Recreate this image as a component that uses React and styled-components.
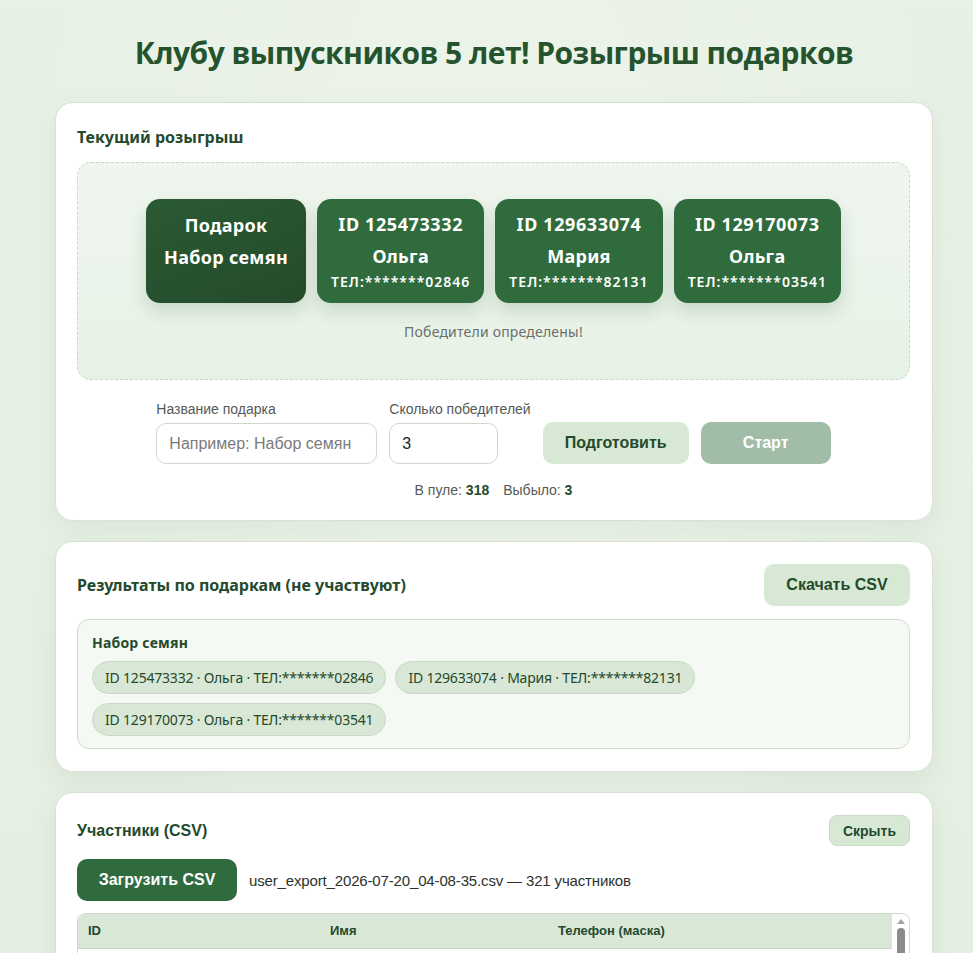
import React from 'react'
import styled, { createGlobalStyle } from 'styled-components'

const winners = [
  { id: '125473332', name: 'Ольга', tel: 'ТЕЛ:*******02846' },
  { id: '129633074', name: 'Мария', tel: 'ТЕЛ:*******82131' },
  { id: '129170073', name: 'Ольга', tel: 'ТЕЛ:*******03541' },
]

const participants = [
  { id: '125473332', name: 'Ольга', tel: '*******02846' },
  { id: '129633074', name: 'Мария', tel: '*******82131' },
  { id: '129170073', name: 'Ольга', tel: '*******03541' },
  { id: '128004512', name: 'Анна', tel: '*******11720' },
  { id: '127331908', name: 'Елена', tel: '*******40958' },
  { id: '126918220', name: 'Ирина', tel: '*******77314' },
  { id: '124501637', name: 'Татьяна', tel: '*******25093' },
]

const App = () => {
  return (
    <>
      <GlobalStyle />
      <Page>
        <Title>Клубу выпускников 5 лет! Розыгрыш подарков</Title>

        <Card>
          <CardTitle>Текущий розыгрыш</CardTitle>
          <Stage>
            <Tiles>
              <GiftTile>
                <TileLine>Подарок</TileLine>
                <TileLine>Набор семян</TileLine>
              </GiftTile>
              {winners.map((w) => (
                <WinnerTile key={w.id}>
                  <TileLine $spaced>ID {w.id}</TileLine>
                  <TileLine>{w.name}</TileLine>
                  <TileTel>{w.tel}</TileTel>
                </WinnerTile>
              ))}
            </Tiles>
            <StageNote>Победители определены!</StageNote>
          </Stage>

          <FormRow>
            <Field>
              <Label>Название подарка</Label>
              <Input $w={221} placeholder="Например: Набор семян" />
            </Field>
            <Field>
              <Label>Сколько победителей</Label>
              <Input $w={109} defaultValue="3" />
            </Field>
            <Actions>
              <SoftButton $w={146}>Подготовить</SoftButton>
              <StartButton>Старт</StartButton>
            </Actions>
          </FormRow>
          <Stats>
            В пуле: <b>318</b>
            <Gap />
            Выбыло: <b>3</b>
          </Stats>
        </Card>

        <Card>
          <CardHead>
            <CardTitle $flush>Результаты по подаркам (не участвуют)</CardTitle>
            <SoftButton $w={146}>Скачать CSV</SoftButton>
          </CardHead>
          <Group>
            <GroupTitle>Набор семян</GroupTitle>
            <Chips>
              {winners.map((w) => (
                <Chip key={w.id}>
                  ID {w.id} · {w.name} · {w.tel}
                </Chip>
              ))}
            </Chips>
          </Group>
        </Card>

        <Card>
          <CardHead>
            <CardTitle $flush $narrow>Участники (CSV)</CardTitle>
            <SmallButton>Скрыть</SmallButton>
          </CardHead>
          <UploadRow>
            <DarkButton>Загрузить CSV</DarkButton>
            <FileName>user_export_2026-07-20_04-08-35.csv — 321 участников</FileName>
          </UploadRow>
          <TableBox>
            <TableScroll>
              <Table>
                <thead>
                  <tr>
                    <Th $w={242}>ID</Th>
                    <Th $w={228}>Имя</Th>
                    <Th>Телефон (маска)</Th>
                  </tr>
                </thead>
                <tbody>
                  {participants.map((p) => (
                    <tr key={p.id}>
                      <Td>{p.id}</Td>
                      <Td>{p.name}</Td>
                      <Td>{p.tel}</Td>
                    </tr>
                  ))}
                </tbody>
              </Table>
            </TableScroll>
            <ScrollRail>
              <ScrollArrow />
              <ScrollThumb />
            </ScrollRail>
          </TableBox>
        </Card>
      </Page>
    </>
  )
}

export default App


const GlobalStyle = createGlobalStyle`
  body {
    margin: 0;
    background: linear-gradient(180deg, #e8f1e6 0%, #e4eee2 100%);
    font-family: "Noto Sans", "Open Sans", sans-serif;
    color: #24492c;
  }
`

const Page = styled.div`
  min-height: 953px;
  padding: 0 40px 40px 55px;
  background: radial-gradient(ellipse at 50% 30%, #eef5ec 0%, rgba(238, 245, 236, 0) 70%);
  display: flex;
  flex-direction: column;
  gap: 20px;
`

const Title = styled.h1`
  margin: 0;
  padding: 34px 0 10px;
  text-align: center;
  font-family: "Open Sans", sans-serif;
  font-size: 30px;
  font-weight: 700;
  letter-spacing: -0.55px;
  color: #24532d;
  line-height: 38px;
`

const Card = styled.section`
  background: #ffffff;
  border: 1px solid #d6e3d3;
  border-radius: 18px;
  box-shadow: 0 8px 24px rgba(50, 90, 50, 0.08);
  padding: 22px 22px 22px 21px;
`

const CardHead = styled.div`
  display: flex;
  justify-content: space-between;
  align-items: center;
  margin-bottom: 13px;
`

const CardTitle = styled.h2`
  margin: ${(p) => (p.$flush ? '0' : '0 0 13px')};
  font-size: 16px;
  font-weight: 700;
  color: #24492c;
  line-height: 24px;
  ${(p) => p.$narrow && 'font-family: "Liberation Sans", Arial, sans-serif;'}
`

const Stage = styled.div`
  border: 1px dashed #c9dac7;
  border-radius: 14px;
  background: linear-gradient(180deg, #f0f6ef 0%, #e7f2e6 100%);
  padding: 36px 20px 37px;
  display: flex;
  flex-direction: column;
  align-items: center;
`

const Tiles = styled.div`
  display: flex;
  gap: 11px;
`

const Tile = styled.div`
  border-radius: 14px;
  color: #ffffff;
  height: 104px;
  box-sizing: border-box;
  display: flex;
  flex-direction: column;
  align-items: center;
  padding-top: 9px;
  box-shadow: 0 8px 18px rgba(40, 90, 50, 0.18);
`

const GiftTile = styled(Tile)`
  width: 160px;
  padding-top: 10px;
  background: linear-gradient(160deg, #2a5a33 0%, #244b2b 100%);
`

const WinnerTile = styled(Tile)`
  padding-left: 14px;
  padding-right: 14px;
  background: #2f6b3c;
`

const TileLine = styled.div`
  font-size: 18px;
  font-weight: 700;
  line-height: 32px;
  letter-spacing: ${(p) => (p.$spaced ? '0.6px' : '0.3px')};
`

const TileTel = styled.div`
  font-size: 14px;
  font-weight: 600;
  line-height: 20px;
  letter-spacing: 1px;
`

const StageNote = styled.div`
  margin-top: 19px;
  font-size: 14px;
  line-height: 20px;
  letter-spacing: 0.2px;
  color: #6b6f6b;
`

const FormRow = styled.div`
  display: flex;
  justify-content: center;
  align-items: flex-end;
  gap: 12px;
  margin-top: 21px;
`

const Field = styled.div`
  display: flex;
  flex-direction: column;
  gap: 6px;
`

const Label = styled.label`
  font-family: "Liberation Sans", Arial, sans-serif;
  font-size: 14px;
  line-height: 16px;
  color: #555a55;
`

const Input = styled.input`
  width: ${(p) => p.$w}px;
  height: 41px;
  box-sizing: border-box;
  border: 1px solid #cfd8cd;
  border-radius: 10px;
  padding: 0 12px;
  font-family: "Liberation Sans", Arial, sans-serif;
  font-size: 16px;
  color: #222;
  outline: none;

  &::placeholder {
    color: #7a7a7a;
  }
`

const Actions = styled.div`
  display: flex;
  gap: 12px;
`

const BaseButton = styled.button`
  border: none;
  cursor: pointer;
  font-family: "Liberation Sans", Arial, sans-serif;
  font-weight: 700;
`

const SoftButton = styled(BaseButton)`
  width: ${(p) => p.$w}px;
  height: 42px;
  border-radius: 10px;
  background: #d7e9d5;
  color: #24492c;
  font-size: 16px;
`

const StartButton = styled(BaseButton)`
  width: 130px;
  height: 42px;
  border-radius: 10px;
  background: #a1bda7;
  color: #ffffff;
  font-size: 16px;
`

const SmallButton = styled(BaseButton)`
  height: 31px;
  padding: 0 13px;
  border: 1px solid #c9dcc6;
  border-radius: 8px;
  background: #d7e9d5;
  color: #24492c;
  font-size: 14px;
`

const DarkButton = styled(BaseButton)`
  width: 160px;
  height: 42px;
  border-radius: 10px;
  background: #2f6b3c;
  color: #ffffff;
  font-size: 16px;
`

const Stats = styled.div`
  margin-top: 18px;
  text-align: center;
  font-family: "Liberation Sans", Arial, sans-serif;
  font-size: 14px;
  color: #555a55;

  b {
    color: #24492c;
  }
`

const Gap = styled.span`
  display: inline-block;
  width: 14px;
`

const Group = styled.div`
  border: 1px solid #cfdccc;
  border-radius: 12px;
  background: #f4f9f3;
  padding: 12px 14px 12px;
`

const GroupTitle = styled.div`
  font-size: 14px;
  font-weight: 700;
  line-height: 22px;
  letter-spacing: 0.2px;
  margin-bottom: 7px;
`

const Chips = styled.div`
  display: flex;
  flex-wrap: wrap;
  gap: 9px;
`

const Chip = styled.span`
  height: 33px;
  box-sizing: border-box;
  display: inline-flex;
  align-items: center;
  padding: 0 12px;
  border: 1px solid #c7d9c4;
  border-radius: 999px;
  background: #d9e8d6;
  font-size: 14px;
  letter-spacing: -0.2px;
  color: #24492c;
`

const UploadRow = styled.div`
  display: flex;
  align-items: center;
  gap: 12px;
  margin-bottom: 12px;
`

const FileName = styled.span`
  font-family: "Liberation Sans", Arial, sans-serif;
  font-size: 15px;
  letter-spacing: -0.15px;
  color: #2b332c;
`

const TableBox = styled.div`
  display: flex;
  border: 1px solid #cfdccc;
  border-radius: 8px;
  overflow: hidden;
  background: #ffffff;
`

const TableScroll = styled.div`
  flex: 1;
  max-height: 280px;
  overflow: hidden;
`

const ScrollRail = styled.div`
  width: 17px;
  display: flex;
  flex-direction: column;
  align-items: center;
  padding-top: 5px;
  gap: 4px;
  background: #ffffff;
`

const ScrollArrow = styled.div`
  width: 0;
  height: 0;
  border-left: 4px solid transparent;
  border-right: 4px solid transparent;
  border-bottom: 5px solid #a3a3a3;
`

const ScrollThumb = styled.div`
  width: 8px;
  height: 120px;
  border-radius: 4px;
  background: #8b8b8b;
`

const Table = styled.table`
  width: 100%;
  table-layout: fixed;
  border-collapse: collapse;
  font-family: "Liberation Sans", Arial, sans-serif;
  font-size: 13px;
`

const Th = styled.th`
  box-sizing: border-box;
  width: ${(p) => (p.$w ? `${p.$w}px` : 'auto')};
  text-align: left;
  background: #d9e8d6;
  color: #24492c;
  font-weight: 700;
  height: 34px;
  padding: 0 10px;
  border-bottom: 1px solid #c7d9c4;
`

const Td = styled.td`
  padding: 8px 10px;
  border-bottom: 1px solid #e3ece1;
  color: #2b332c;
`
